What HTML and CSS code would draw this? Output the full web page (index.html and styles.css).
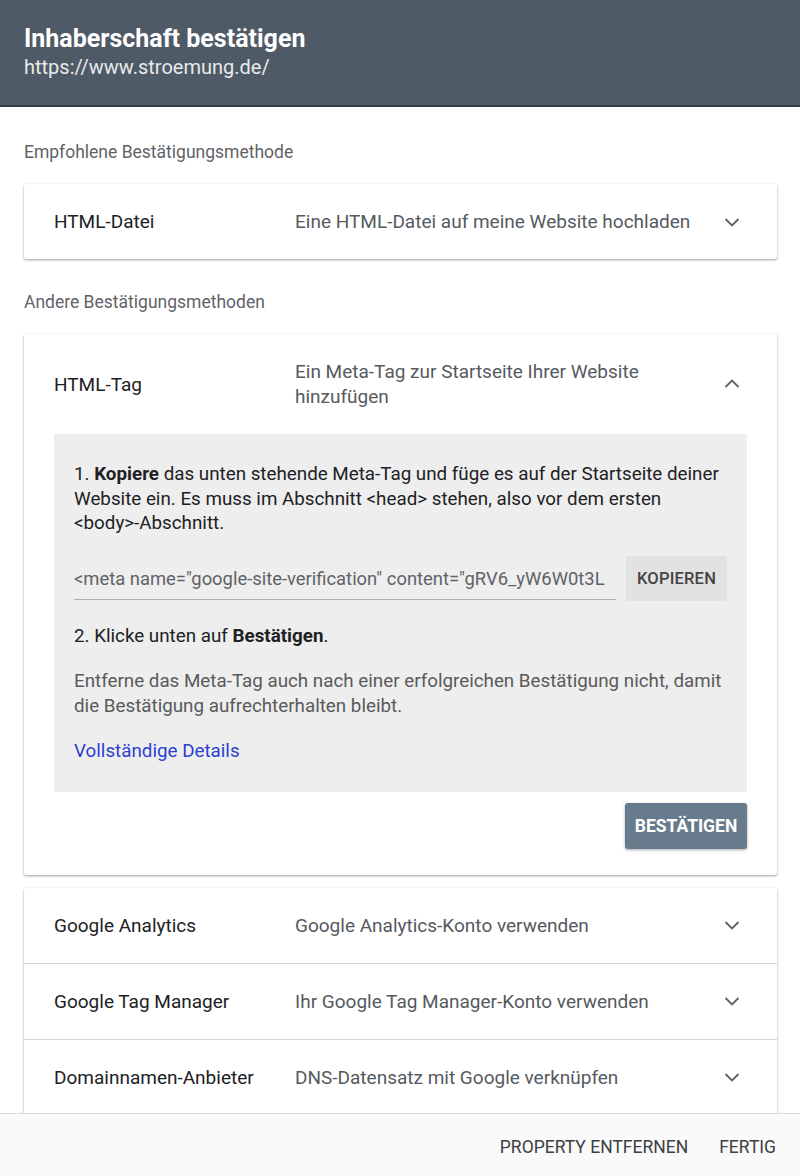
FILE: index.html
```html
<!DOCTYPE html>
<html lang="de">
<head>
<meta charset="utf-8">
<title>Inhaberschaft bestätigen</title>
<link rel="stylesheet" href="styles.css">
</head>
<body>
<header class="top">
  <h1 class="title">Inhaberschaft bestätigen</h1>
  <div class="url">https://www.stroemung.de/</div>
</header>
<main class="content">
  <div class="section-label">Empfohlene Bestätigungsmethode</div>
  <div class="card">
    <div class="row">
      <div class="row-name">HTML-Datei</div>
      <div class="row-desc">Eine HTML-Datei auf meine Website hochladen</div>
      <svg class="chev" viewBox="0 0 24 24"><path d="M5.5 9l6.5 6.5 6.5-6.5"/></svg>
    </div>
  </div>

  <div class="section-label second">Andere Bestätigungsmethoden</div>
  <div class="card open">
    <div class="row">
      <div class="row-name">HTML-Tag</div>
      <div class="row-desc narrow">Ein Meta-Tag zur Startseite Ihrer Website hinzufügen</div>
      <svg class="chev" viewBox="0 0 24 24"><path d="M5.5 15l6.5-6.5 6.5 6.5"/></svg>
    </div>
    <div class="panel">
      <p class="step">1. <b>Kopiere</b> das unten stehende Meta-Tag und füge es auf der Startseite deiner Website ein. Es muss im Abschnitt <code>&lt;head&gt;</code> stehen, also vor dem ersten <span class="nowrap"><code>&lt;body&gt;</code>-Abschnitt.</span></p>
      <div class="copy-row">
        <div class="field">&lt;meta name="google-site-verification" content="gRV6_yW6W0t3L</div>
        <button class="copy-btn">KOPIEREN</button>
      </div>
      <p class="step step2">2. Klicke unten auf <b>Bestätigen</b>.</p>
      <p class="note">Entferne das Meta-Tag auch nach einer erfolgreichen Bestätigung nicht, damit die Bestätigung aufrechterhalten bleibt.</p>
      <a class="link" href="#">Vollständige Details</a>
    </div>
    <div class="actions">
      <button class="confirm">BESTÄTIGEN</button>
    </div>
  </div>

  <div class="card group">
    <div class="row">
      <div class="row-name">Google Analytics</div>
      <div class="row-desc">Google Analytics-Konto verwenden</div>
      <svg class="chev" viewBox="0 0 24 24"><path d="M5.5 9l6.5 6.5 6.5-6.5"/></svg>
    </div>
    <div class="row">
      <div class="row-name">Google Tag Manager</div>
      <div class="row-desc">Ihr Google Tag Manager-Konto verwenden</div>
      <svg class="chev" viewBox="0 0 24 24"><path d="M5.5 9l6.5 6.5 6.5-6.5"/></svg>
    </div>
    <div class="row">
      <div class="row-name">Domainnamen-Anbieter</div>
      <div class="row-desc">DNS-Datensatz mit Google verknüpfen</div>
      <svg class="chev" viewBox="0 0 24 24"><path d="M5.5 9l6.5 6.5 6.5-6.5"/></svg>
    </div>
  </div>
</main>
<footer class="bottom">
  <button class="text-btn">PROPERTY ENTFERNEN</button>
  <button class="text-btn">FERTIG</button>
</footer>
</body>
</html>
```

FILE: styles.css
```css
html, body {
  margin: 0;
  padding: 0;
}
body {
  height: 1176px;
  display: flex;
  flex-direction: column;
  overflow: hidden;
  font-family: Roboto, "Liberation Sans", sans-serif;
  background: #ffffff;
  color: #212121;
}
.top {
  flex: none;
  height: 107px;
  box-sizing: border-box;
  background: #4e5a65;
  border-bottom: 2px solid #2f3b46;
  padding: 24px 24px 0;
  color: #ffffff;
}
.title {
  margin: 0;
  font-size: 25px;
  font-weight: 700;
  line-height: 30px;
}
.url {
  font-size: 20px;
  line-height: 26px;
  color: #e8eaed;
}
.content {
  flex: 1;
  overflow: hidden;
  padding: 0 23px 0 24px;
}
.section-label {
  margin-top: 35px;
  font-size: 17.5px;
  line-height: 20px;
  color: #5f6368;
}
.section-label.second {
  margin-top: 33px;
}
.card {
  margin-top: 22px;
  background: #ffffff;
  border-radius: 2px;
  box-shadow: 0 1px 3px rgba(0,0,0,0.22), 0 1px 2px rgba(0,0,0,0.18);
}
.card.group {
  margin-top: 13px;
}
.row {
  display: flex;
  align-items: center;
  padding: 25px 33px 25px 30px;
  min-height: 25px;
  font-size: 19px;
  line-height: 25px;
}
.group .row + .row {
  border-top: 1px solid #d6d6d6;
}
.row-name {
  width: 241px;
  flex: none;
  color: #202124;
}
.row-desc {
  flex: 1;
  color: #555a5f;
  padding-right: 8px;
}
.row-desc.narrow {
  padding-right: 60px;
}
.chev {
  width: 24px;
  height: 24px;
  flex: none;
}
.chev path {
  fill: none;
  stroke: #5f6368;
  stroke-width: 1.9;
}
.panel {
  margin: 0 30px;
  background: #eeeeee;
  padding: 28px 20px 28px 20px;
  font-size: 18.8px;
  line-height: 24.5px;
  color: #202124;
}
.panel p {
  margin: 0;
}
code {
  font-family: Roboto, sans-serif;
  font-size: inherit;
}
.nowrap {
  white-space: nowrap;
}
.copy-row {
  display: flex;
  align-items: center;
  gap: 10px;
  margin-top: 20px;
}
.field {
  flex: 1;
  min-width: 0;
  overflow: hidden;
  white-space: nowrap;
  font-size: 18.4px;
  color: #5f6368;
  border-bottom: 1px solid #b0b0b0;
  padding: 10px 0 8px;
  line-height: 24px;
}
.copy-btn {
  flex: none;
  width: 101px;
  height: 45px;
  border: none;
  border-radius: 2px;
  background: #e2e2e2;
  color: #444;
  font-family: Roboto, sans-serif;
  font-size: 16.5px;
  font-weight: 500;
  letter-spacing: 0.2px;
}
.step2 {
  margin-top: 23px !important;
}
.note {
  margin-top: 21px !important;
  color: #5a5a5a;
}
.link {
  display: block;
  margin-top: 21px;
  color: #2d3fd0;
  text-decoration: none;
}
.actions {
  display: flex;
  justify-content: flex-end;
  padding: 11px 30px 26px;
}
.confirm {
  width: 122px;
  height: 46px;
  border: none;
  border-radius: 3px;
  background: #687b8c;
  color: #ffffff;
  font-family: Roboto, sans-serif;
  font-size: 17.5px;
  font-weight: 700;
  box-shadow: 0 1px 3px rgba(0,0,0,0.35);
}
.bottom {
  flex: none;
  height: 63px;
  box-sizing: border-box;
  background: #fafafa;
  border-top: 1px solid #dcdcdc;
  display: flex;
  align-items: center;
  justify-content: flex-end;
  gap: 31px;
  padding: 3px 24px 0 0;
}
.text-btn {
  background: none;
  border: none;
  padding: 0;
  font-family: Roboto, sans-serif;
  font-size: 17.5px;
  color: #3c4043;
}
```
